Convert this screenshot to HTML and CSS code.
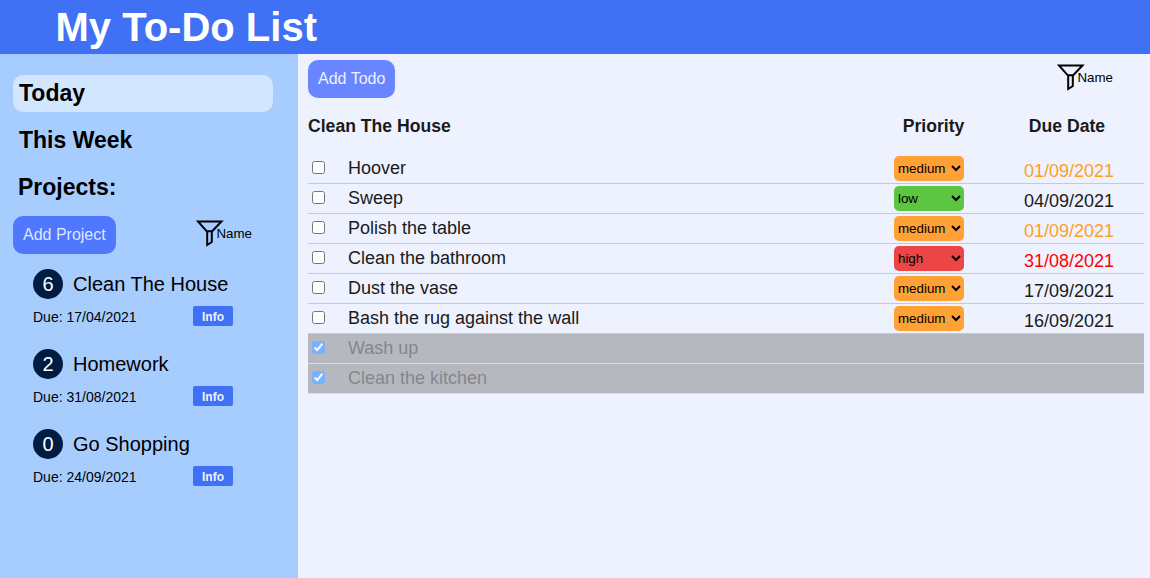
FILE: index.html
```html
<!DOCTYPE html>
<html lang="en">
<head>
<meta charset="utf-8">
<title>My To-Do List</title>
<link rel="stylesheet" href="styles.css">
</head>
<body>
<header class="header"><h1 class="title">My To-Do List</h1></header>
<div class="layout">
  <aside class="sidebar">
    <h2 class="nav active">Today</h2>
    <h2 class="nav">This Week</h2>
    <h2 class="nav projects-title">Projects:</h2>
    <div class="toolbar">
      <button class="add add-project">Add Project</button>
      <div class="filter"><svg class="funnel" width="28" height="28" viewBox="0 0 28 28"><path d="M2 1.5H25.5L16.2 11.3H10.8ZM11.2 11V25L15.8 22V11" fill="none" stroke="#000" stroke-width="2"/></svg><span>Name</span></div>
    </div>
    <ul class="projects">
      <li class="project"><div class="project-head"><span class="count">6</span><span>Clean The House</span></div><div class="project-foot"><span>Due: 17/04/2021</span><button class="info">Info</button></div></li>
      <li class="project"><div class="project-head"><span class="count">2</span><span>Homework</span></div><div class="project-foot"><span>Due: 31/08/2021</span><button class="info">Info</button></div></li>
      <li class="project"><div class="project-head"><span class="count">0</span><span>Go Shopping</span></div><div class="project-foot"><span>Due: 24/09/2021</span><button class="info">Info</button></div></li>
    </ul>
  </aside>
  <main class="main">
    <div class="toolbar">
      <button class="add add-todo">Add Todo</button>
      <div class="filter"><svg class="funnel" width="28" height="28" viewBox="0 0 28 28"><path d="M2 1.5H25.5L16.2 11.3H10.8ZM11.2 11V25L15.8 22V11" fill="none" stroke="#000" stroke-width="2"/></svg><span>Name</span></div>
    </div>
    <div class="heading"><span>Clean The House</span><span class="center">Priority</span><span class="center">Due Date</span></div>
    <div class="todo"><input type="checkbox" class="check"><span>Hoover</span><select class="priority medium"><option>medium</option></select><span class="date soon">01/09/2021</span></div>
    <div class="todo"><input type="checkbox" class="check"><span>Sweep</span><select class="priority low"><option>low</option></select><span class="date">04/09/2021</span></div>
    <div class="todo"><input type="checkbox" class="check"><span>Polish the table</span><select class="priority medium"><option>medium</option></select><span class="date soon">01/09/2021</span></div>
    <div class="todo"><input type="checkbox" class="check"><span>Clean the bathroom</span><select class="priority high"><option>high</option></select><span class="date late">31/08/2021</span></div>
    <div class="todo"><input type="checkbox" class="check"><span>Dust the vase</span><select class="priority medium"><option>medium</option></select><span class="date">17/09/2021</span></div>
    <div class="todo"><input type="checkbox" class="check"><span>Bash the rug against the wall</span><select class="priority medium"><option>medium</option></select><span class="date">16/09/2021</span></div>
    <div class="todo done"><input type="checkbox" class="check" checked><span>Wash up</span></div>
    <div class="todo done"><input type="checkbox" class="check" checked><span>Clean the kitchen</span></div>
  </main>
</div>
</body>
</html>
```
FILE: styles.css
```css
* { box-sizing: border-box; }
body {
  margin: 0;
  height: 100vh;
  display: flex;
  flex-direction: column;
  font-family: Arial, "Liberation Sans", sans-serif;
  color: #000;
}
button { border: 0; font-family: inherit; }
.header { height: 54px; padding-left: 55.5px; background: #4070f4; }
.title { margin: 0; font-size: 40px; line-height: 54px; color: #fff; }
.layout { flex: 1; display: flex; }
.sidebar { width: 298px; padding: 21px 25px 0 13px; background: #a7cdff; }
.nav {
  margin: 0 0 10px;
  height: 37px;
  padding-left: 6px;
  line-height: 36px;
  font-size: 23px;
  border-radius: 10px;
}
.active { background: #d2e6ff; }
.projects-title { padding-left: 5px; }
.toolbar { display: flex; justify-content: space-between; height: 38px; }
.add { height: 38px; padding: 0 10px; border-radius: 10px; font-size: 16px; color: #eef2ff; }
.add-project { background: #4f78ff; color: #dce8ff; }
.add-todo { background: #6985ff; }
.filter { display: flex; align-items: center; font-size: 13.333px; height: 34px; padding-right: 21px; }
.funnel { margin: 1px -8px 0 0; }
.projects { list-style: none; margin: 15px 0 0; padding: 0 40px 0 20px; }
.project { height: 80px; }
.project-head { display: flex; align-items: center; gap: 10px; height: 30px; font-size: 20px; }
.count { width: 30px; height: 30px; line-height: 30px; border-radius: 50%; background: #001c40; color: #fff; text-align: center; }
.project-foot { display: flex; justify-content: space-between; margin-top: 7px; font-size: 14px; line-height: 22px; }
.info { width: 40px; height: 20px; padding: 1px 0 0; border-radius: 2px; background: #4070f4; color: #eef2ff; font-size: 12px; font-weight: bold; }
.main { flex: 1; padding: 6px 6px 0 10px; background: #eef2ff; color: #1a1a1a; }
.main .filter { padding-right: 31px; color: #000; }
.heading {
  display: grid;
  grid-template-columns: 1fr 113px 154px;
  height: 56px;
  line-height: 56px;
  font-size: 17.6px;
  font-weight: bold;
}
.center { text-align: center; }
.todo {
  display: grid;
  grid-template-columns: 40px 1fr 70px 180px;
  align-items: center;
  height: 30px;
  border-bottom: 1px solid #b9c9ff;
  font-size: 18px;
}
.check { width: 13px; height: 13px; margin: 0 4px 2px; }
.priority { width: 70px; height: 25px; border: 0; border-radius: 5px; font: 13.333px Arial, "Liberation Sans", sans-serif; color: #000; }
.medium { background: #ffa135; }
.low { background: #5cc541; }
.high { background: #eb4545; }
.date { padding: 5px 0 0 60px; }
.soon { color: #ffa01e; }
.late { color: #f00; }
.done { background: #808080; opacity: 0.5; }
```
